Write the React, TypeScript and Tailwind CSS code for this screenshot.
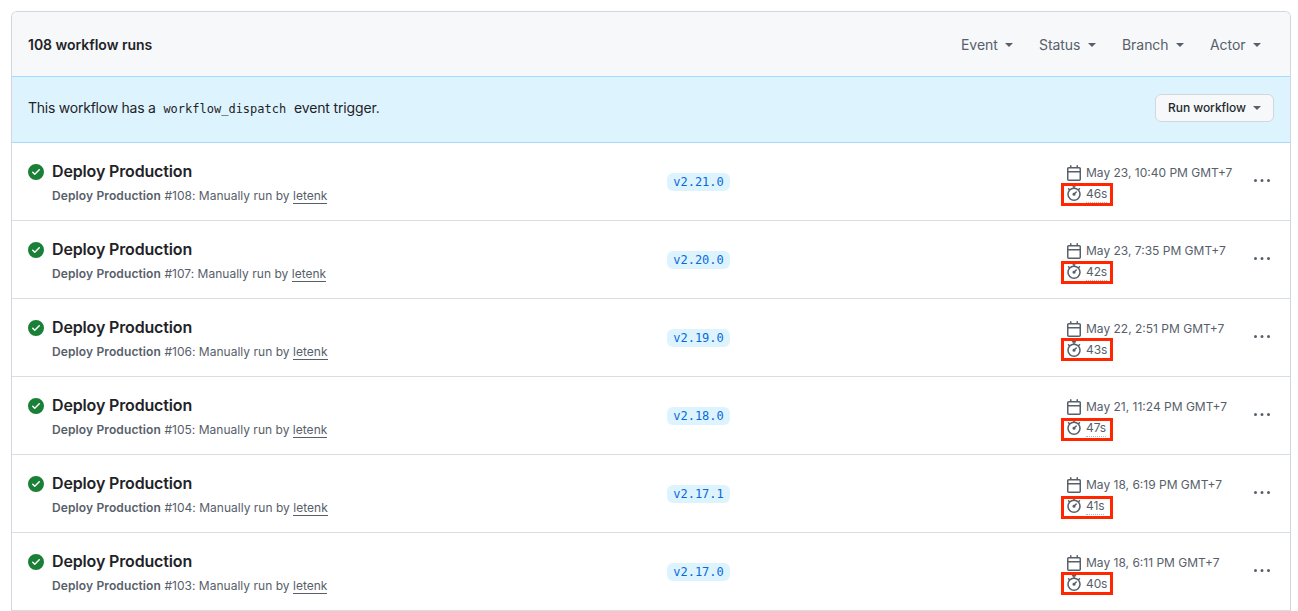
const runs = [
  { id: 108, tag: 'v2.21.0', date: 'May 23, 10:40 PM GMT+7', time: '46s', box: 'top-[40px]' },
  { id: 107, tag: 'v2.20.0', date: 'May 23, 7:35 PM GMT+7', time: '42s', box: 'top-[40px]' },
  { id: 106, tag: 'v2.19.0', date: 'May 22, 2:51 PM GMT+7', time: '43s', box: 'top-[39px]' },
  { id: 105, tag: 'v2.18.0', date: 'May 21, 11:24 PM GMT+7', time: '47s', box: 'top-[41px]' },
  { id: 104, tag: 'v2.17.1', date: 'May 18, 6:19 PM GMT+7', time: '41s', box: 'top-[41px]' },
  { id: 103, tag: 'v2.17.0', date: 'May 18, 6:11 PM GMT+7', time: '40s', box: 'top-[39px]' },
]

const icons = {
  check:
    'M8 16A8 8 0 1 1 8 0a8 8 0 0 1 0 16Zm3.78-9.72a.751.751 0 0 0-.018-1.042.751.751 0 0 0-1.042-.018L6.75 9.19 5.28 7.72a.751.751 0 0 0-1.042.018.751.751 0 0 0-.018 1.042l2 2a.75.75 0 0 0 1.06 0Z',
  calendar:
    'M4.75 0a.75.75 0 0 1 .75.75V2h5V.75a.75.75 0 0 1 1.5 0V2h1.25c.966 0 1.75.784 1.75 1.75v10.5A1.75 1.75 0 0 1 13.25 16H2.75A1.75 1.75 0 0 1 1 14.25V3.75C1 2.784 1.784 2 2.75 2H4V.75A.75.75 0 0 1 4.75 0ZM2.5 7.5v6.75c0 .138.112.25.25.25h10.5a.25.25 0 0 0 .25-.25V7.5Zm10.75-4H2.75a.25.25 0 0 0-.25.25V6h11V3.75a.25.25 0 0 0-.25-.25Z',
  stopwatch:
    'M5.75.75A.75.75 0 0 1 6.5 0h3a.75.75 0 0 1 0 1.5h-.75v1l-.001.041a6.724 6.724 0 0 1 3.464 1.435l.007-.006.75-.75a.749.749 0 0 1 1.275.326.749.749 0 0 1-.215.734l-.75.75-.006.007a6.75 6.75 0 1 1-10.548 0L2.72 5.03l-.75-.75a.751.751 0 0 1 .018-1.042.751.751 0 0 1 1.042-.018l.75.75.007.006A6.72 6.72 0 0 1 7.25 2.541V1.5H6.5a.75.75 0 0 1-.75-.75ZM8 14.5a5.25 5.25 0 1 0-.001-10.501A5.25 5.25 0 0 0 8 14.5Zm.389-6.7 1.33-1.33a.75.75 0 1 1 1.061 1.06L9.45 8.861A1.503 1.503 0 0 1 8 10.75a1.499 1.499 0 1 1 .389-2.95Z',
  kebab:
    'M8 9a1.5 1.5 0 1 0 0-3 1.5 1.5 0 0 0 0 3ZM1.5 9a1.5 1.5 0 1 0 0-3 1.5 1.5 0 0 0 0 3Zm13 0a1.5 1.5 0 1 0 0-3 1.5 1.5 0 0 0 0 3Z',
}

function Icon({ name, className = '' }: { name: keyof typeof icons; className?: string }) {
  return (
    <svg viewBox="0 0 16 16" className={`size-4 shrink-0 fill-current ${className}`} aria-hidden="true">
      <path d={icons[name]} />
    </svg>
  )
}

function Caret() {
  return (
    <svg viewBox="0 0 8 4" className="h-1 w-2 shrink-0 fill-[#57606a]" aria-hidden="true">
      <path d="M0 0h8L4 4z" />
    </svg>
  )
}

function Filter({ label, className }: { label: string; className: string }) {
  return (
    <button className={`flex items-center justify-between ${className}`}>
      {label}
      <Caret />
    </button>
  )
}

function Run({ run }: { run: (typeof runs)[number] }) {
  return (
    <li className="relative flex h-[78px] border-b border-[#d8dee4] pl-4">
      <Icon name="check" className="mt-[21px] text-[#1a7f37]" />
      <div className="ml-2 w-[615px] pt-4">
        <h3 className="text-base leading-6 font-semibold tracking-[-0.15px]">Deploy Production</h3>
        <p className="mt-1 text-xs leading-[18px] tracking-[0.02px] text-[#57606a]">
          <b className="font-semibold tracking-[0.12px]">Deploy Production</b> #{run.id}: Manually run by{' '}
          <a className="border-b border-[#57606a]">letenk</a>
        </p>
      </div>
      <div className="w-[399px] pt-[30px]">
        <span className="flex h-[18px] w-[63px] items-center justify-center rounded-md bg-[#ddf4ff] font-['DejaVu_Sans_Mono',monospace] text-xs text-[#0969da]">
          {run.tag}
        </span>
      </div>
      <div className="w-[188px] pt-[19px] text-xs text-[#57606a]">
        <div className="flex h-[21px] items-center gap-1">
          <Icon name="calendar" className="mt-px" />
          <span className="whitespace-nowrap">{run.date}</span>
        </div>
        <div className="flex h-[21px] items-center gap-1">
          <Icon name="stopwatch" className="mb-px" />
          <span className="border-b border-dotted border-[#afb8c1] leading-[17px] tracking-[-0.1px]">{run.time}</span>
        </div>
      </div>
      <Icon name="kebab" className="mt-[30px] text-[#57606a]" />
      <div className={`absolute left-[1049px] h-[23px] w-[52px] border-[3px] border-[#ff2600] ${run.box}`} />
    </li>
  )
}

export default function App() {
  return (
    <main className="h-[611px] overflow-hidden bg-white pt-[11px] pr-[7px] pl-[11px] font-['Inter',sans-serif] text-[#1f2328]">
      <section className="overflow-hidden rounded-t-md border border-b-0 border-[#d0d7de]">
        <header className="flex h-16 items-center justify-between bg-[#f6f8fa] pr-[29px] pl-4 text-sm">
          <strong className="mt-0.5 font-semibold tracking-[-0.02px]">108 workflow runs</strong>
          <nav className="mt-0.5 flex gap-[26px] tracking-[-0.05px] text-[#57606a]">
            <Filter label="Event" className="w-[52px]" />
            <Filter label="Status" className="w-[57px]" />
            <Filter label="Branch" className="w-[62px]" />
            <Filter label="Actor" className="w-[51px]" />
          </nav>
        </header>
        <div className="flex h-[67px] items-center justify-between border-y border-[#a5dafd] bg-[#ddf4ff] px-4 pb-[3px] text-sm">
          <p className="tracking-[-0.24px]">
            This workflow has a{' '}
            <code className="px-1 font-['DejaVu_Sans_Mono',monospace] text-xs tracking-normal">workflow_dispatch</code>{' '}
            <span className="tracking-[-0.14px]">event trigger.</span>
          </p>
          <button className="flex h-7 w-[119px] items-center justify-between rounded-md border border-[#d0d7de] bg-[#f6f8fa] px-3 text-xs font-medium tracking-[-0.05px] text-[#24292f]">
            Run workflow
            <Caret />
          </button>
        </div>
        <ul>
          {runs.map((run) => (
            <Run key={run.id} run={run} />
          ))}
        </ul>
      </section>
    </main>
  )
}
